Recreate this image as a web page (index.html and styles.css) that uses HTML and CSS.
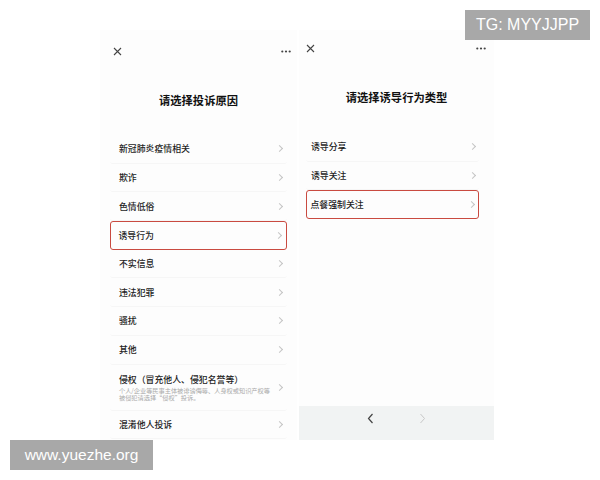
FILE: index.html
```html
<!DOCTYPE html>
<html lang="zh-CN">
<head>
    <meta charset="UTF-8">
    <title>投诉</title>
    <link rel="stylesheet" href="styles.css">
</head>
<body>
    <div class="screens">
        <!-- 左侧：投诉原因 -->
        <div class="panel panel-left">
            <div class="topbar">
                <svg class="close" width="9" height="9" viewBox="0 0 9 9"><path d="M1 1L8 8M8 1L1 8" stroke="#444" stroke-width="1.1"/></svg>
                <svg class="more" width="10" height="3" viewBox="0 0 10 3"><circle cx="1.3" cy="1.5" r="1.1" fill="#444"/><circle cx="5" cy="1.5" r="1.1" fill="#444"/><circle cx="8.7" cy="1.5" r="1.1" fill="#444"/></svg>
            </div>
            <h2 class="title">请选择投诉原因</h2>
            <ul class="list">
                <li class="item"><span>新冠肺炎疫情相关</span><i class="chev"></i></li>
                <li class="item"><span>欺诈</span><i class="chev"></i></li>
                <li class="item"><span>色情低俗</span><i class="chev"></i></li>
                <li class="item active"><span>诱导行为</span><i class="chev"></i></li>
                <li class="item"><span>不实信息</span><i class="chev"></i></li>
                <li class="item"><span>违法犯罪</span><i class="chev"></i></li>
                <li class="item"><span>骚扰</span><i class="chev"></i></li>
                <li class="item"><span>其他</span><i class="chev"></i></li>
                <li class="item tall">
                    <div class="item-text">
                        <span>侵权（冒充他人、侵犯名誉等）</span>
                        <p class="desc">个人/企业等民事主体被诽谤侮辱、人身权或知识产权等被侵犯请选择“侵权”投诉。</p>
                    </div>
                    <i class="chev"></i>
                </li>
                <li class="item"><span>混淆他人投诉</span><i class="chev"></i></li>
            </ul>
        </div>

        <!-- 右侧：诱导行为类型 -->
        <div class="panel panel-right">
            <div class="topbar">
                <svg class="close" width="9" height="9" viewBox="0 0 9 9"><path d="M1 1L8 8M8 1L1 8" stroke="#444" stroke-width="1.1"/></svg>
                <svg class="more" width="10" height="3" viewBox="0 0 10 3"><circle cx="1.3" cy="1.5" r="1.1" fill="#444"/><circle cx="5" cy="1.5" r="1.1" fill="#444"/><circle cx="8.7" cy="1.5" r="1.1" fill="#444"/></svg>
            </div>
            <h2 class="title">请选择诱导行为类型</h2>
            <ul class="list">
                <li class="item"><span>诱导分享</span><i class="chev"></i></li>
                <li class="item"><span>诱导关注</span><i class="chev"></i></li>
                <li class="item active"><span>点餐强制关注</span><i class="chev"></i></li>
            </ul>
            <div class="navbar">
                <svg width="7" height="11" viewBox="0 0 7 11"><path d="M5.5 1L1.5 5.5L5.5 10" fill="none" stroke="#444" stroke-width="1.2"/></svg>
                <svg width="7" height="11" viewBox="0 0 7 11"><path d="M1.5 1L5.5 5.5L1.5 10" fill="none" stroke="#c8c8c8" stroke-width="1"/></svg>
            </div>
        </div>
    </div>

    <div class="mark mark-tg">TG: MYYJJPP</div>
    <div class="mark mark-site">www.yuezhe.org</div>
</body>
</html>
```

FILE: styles.css
```css
* {
    margin: 0;
    padding: 0;
    box-sizing: border-box;
}

body {
    font-family: "Noto Sans CJK SC", "Noto Sans", sans-serif;
    background: #fff;
    width: 600px;
    height: 480px;
    overflow: hidden;
    position: relative;
}

.screens {
    display: flex;
    gap: 2px;
    padding: 30px 0 0 100px;
}

.panel {
    background: #fdfdfd;
    height: 410px;
    display: flex;
    flex-direction: column;
    overflow: hidden;
}

.panel-left {
    width: 197px;
}

.panel-right {
    width: 195px;
}

.topbar {
    display: flex;
    justify-content: space-between;
    align-items: center;
    flex-shrink: 0;
}

.panel-left .topbar {
    height: 42px;
    padding: 0 6px 0 13px;
}

.panel-right .topbar {
    height: 36px;
    padding: 0 8px 0 7px;
}

.title {
    text-align: center;
    font-size: 11.3px;
    font-weight: 700;
    color: #111;
    flex-shrink: 0;
}

.panel-left .title {
    height: 56px;
    line-height: 56px;
    margin-bottom: 7px;
}

.panel-right .title {
    height: 62px;
    line-height: 62px;
    margin-bottom: 5px;
}

.list {
    list-style: none;
}

.panel-left .list {
    padding: 0 10px;
}

.panel-right .list {
    padding: 0 15px 0 7px;
}

.item {
    height: 28.7px;
    display: flex;
    align-items: center;
    justify-content: space-between;
    font-size: 8.9px;
    font-weight: 500;
    color: #1e1e1e;
    border-bottom: 1px solid #f6f6f6;
    border-radius: 3px;
}

.panel-left .item {
    padding: 0 3px 0 9px;
}

.panel-right .item {
    padding: 0 2px 0 5px;
}

.item.tall {
    height: 46px;
}

.item.active {
    border: 1.5px solid #c94a40;
    padding-left: 7.5px;
}

.panel-right .item.active {
    padding-left: 3.5px;
}

.item-text {
    display: flex;
    flex-direction: column;
    gap: 1px;
}

.desc {
    font-size: 6.2px;
    font-weight: 400;
    color: #aaa;
    line-height: 7.5px;
    width: 152px;
}

.chev {
    width: 5px;
    height: 5px;
    border-top: 1px solid #c4c4c4;
    border-right: 1px solid #c4c4c4;
    transform: rotate(45deg);
    margin-right: 2px;
}

.navbar {
    margin-top: auto;
    height: 34px;
    background: #f1f3f3;
    display: flex;
    justify-content: center;
    gap: 45px;
    padding-top: 7px;
}

.mark {
    position: absolute;
    background: #a8a8a8;
    color: #fff;
    font-family: "Liberation Sans", sans-serif;
    height: 30px;
    line-height: 30px;
    text-align: center;
}

.mark-tg {
    top: 10px;
    left: 465px;
    width: 125px;
    font-size: 16px;
}

.mark-site {
    top: 440px;
    left: 10px;
    width: 143px;
    font-size: 15.5px;
}
```
